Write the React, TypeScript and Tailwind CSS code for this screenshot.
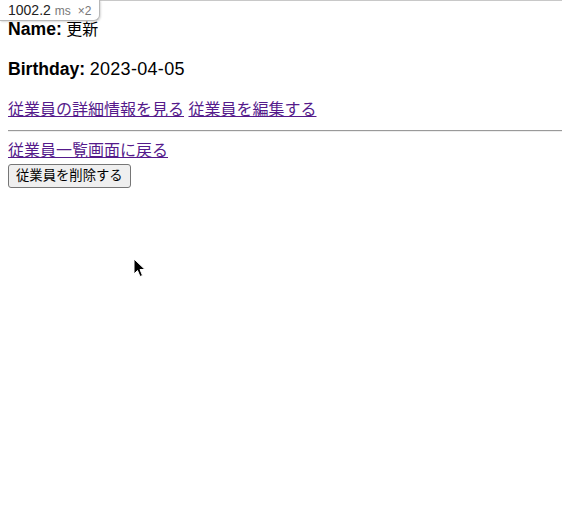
import React from 'react';

const font = { fontFamily: '"Liberation Sans", "Noto Sans CJK JP", sans-serif' };

const ProfilerBadge: React.FC = () => (
  <div className="absolute top-0 left-0 z-10 flex h-[21px] items-baseline gap-1 rounded-br-[6px] border border-t-0 border-l-0 border-[#b8b8b8] bg-white pl-2 pr-[7px] pt-[2px] shadow-[1px_1px_2px_rgba(0,0,0,0.15)]">
    <span className="text-[14px] leading-4 text-[#222]">1002.2</span>
    <span className="text-[12px] leading-4 text-[#777]">ms</span>
    <span className="ml-[3px] text-[12px] leading-4 text-[#777]">×2</span>
  </div>
);

const Cursor: React.FC = () => (
  <svg className="absolute left-[133px] top-[258px] z-10" width="14" height="20" viewBox="0 0 14 20">
    <path d="M1 1 L1 16 L4.5 12.5 L7 18.5 L9.5 17.5 L7 11.5 L12 11.5 Z" fill="#000" stroke="#fff" strokeWidth="1" strokeLinejoin="round" />
  </svg>
);

const App: React.FC = () => {
  return (
    <div className="relative min-h-[510px] overflow-hidden bg-white text-black" style={font}>
      <div className="absolute top-0 left-0 right-0 h-px bg-[#c8c8c8]" />
      <ProfilerBadge />
      <Cursor />
      <main className="px-2 pt-[10px] pb-2 text-[16px] leading-6">
        <p className="mt-2 mb-4 h-6">
          <strong className="text-[17.6px] leading-4 font-bold">Name:</strong> 更新
        </p>
        <p className="mb-4 h-6">
          <strong className="text-[17.6px] leading-4 font-bold">Birthday:</strong>{' '}
          <span className="text-[18px] leading-4 tracking-[0.3px]">2023-04-05</span>
        </p>
        <div className="h-6">
          <a href="#" className="text-[#551a8b] underline">従業員の詳細情報を見る</a>{' '}
          <a href="#" className="text-[#551a8b] underline">従業員を編集する</a>
        </div>
        <hr className="-mr-2 mt-2 mb-[7px] border-t border-b border-t-[#9a9a9a] border-b-[#eeeeee]" />
        <div className="h-6">
          <a href="#" className="text-[#551a8b] underline">従業員一覧画面に戻る</a>
        </div>
        <form>
          <button
            type="button"
            className="h-[24px] rounded-[3px] border border-[#767676] bg-[#efefef] px-[7px] text-[13.33px] leading-4 text-black"
          >
            従業員を削除する
          </button>
        </form>
      </main>
    </div>
  );
};

export default App;
